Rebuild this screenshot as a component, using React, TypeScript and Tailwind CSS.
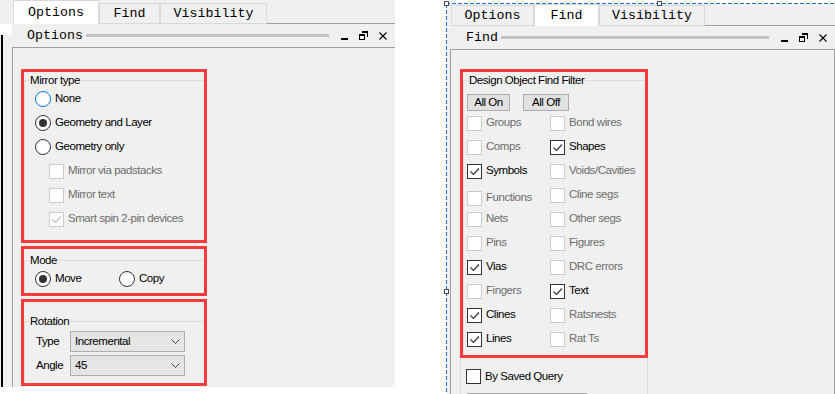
import React from 'react'

type Item = { label: string; on?: boolean; shift?: boolean }

const leftItems: Item[] = [
    { label: 'Groups' },
    { label: 'Comps' },
    { label: 'Symbols', on: true },
    { label: 'Functions', shift: true },
    { label: 'Nets' },
    { label: 'Pins' },
    { label: 'Vias', on: true },
    { label: 'Fingers' },
    { label: 'Clines', on: true },
    { label: 'Lines', on: true },
]

const rightItems: Item[] = [
    { label: 'Bond wires' },
    { label: 'Shapes', on: true },
    { label: 'Voids/Cavities' },
    { label: 'Cline segs' },
    { label: 'Other segs' },
    { label: 'Figures' },
    { label: 'DRC errors' },
    { label: 'Text', on: true },
    { label: 'Ratsnests' },
    { label: 'Rat Ts' },
]

function Radio({ label, checked, focus }: { label: string; checked?: boolean; focus?: boolean }) {
    return (
        <div className="flex h-[24px] items-center gap-[4px]">
            <span
                className={
                    focus
                        ? 'flex h-[16px] w-[16px] items-center justify-center rounded-full border border-[#0078d7] bg-white'
                        : 'flex h-[16px] w-[16px] items-center justify-center rounded-full border border-[#333333] bg-white'
                }
            >
                {checked && <span className="h-[8px] w-[8px] rounded-full bg-[#333333]" />}
            </span>
            <span className="text-black">{label}</span>
        </div>
    )
}

function Box({ on, disabled }: { on?: boolean; disabled?: boolean }) {
    return (
        <span
            className={
                disabled
                    ? 'flex h-[15px] w-[15px] shrink-0 items-center justify-center border border-[#cccccc] bg-white'
                    : 'flex h-[15px] w-[15px] shrink-0 items-center justify-center border border-[#333333] bg-white'
            }
        >
            {on && (
                <svg width="13" height="13" viewBox="0 0 13 13">
                    <path
                        d="M2.5 6.5 L5.5 9.5 L11 3.5"
                        fill="none"
                        stroke={disabled ? '#c2c2c2' : '#333333'}
                        strokeWidth="1.2"
                    />
                </svg>
            )}
        </span>
    )
}

function Check({ item, disabled }: { item: Item; disabled?: boolean }) {
    return (
        <div className={item.shift ? 'flex h-[24px] items-center gap-[4px] pt-[6px]' : 'flex h-[24px] items-center gap-[4px]'}>
            <Box on={item.on} disabled={disabled} />
            <span className={disabled ? 'text-[#6d6d6d]' : 'text-black'}>{item.label}</span>
        </div>
    )
}

function Select({ value }: { value: string }) {
    return (
        <div className="flex h-[21px] w-[115px] items-center justify-between border border-[#adadad] bg-[#e5e5e5] pl-[4px] pr-[4px]">
            <span>{value}</span>
            <svg width="9" height="6" viewBox="0 0 9 6">
                <path d="M0.5 0.5 L4.5 4.5 L8.5 0.5" fill="none" stroke="#444444" strokeWidth="1" />
            </svg>
        </div>
    )
}

function Tab({ label, active, cls }: { label: string; active?: boolean; cls: string }) {
    return (
        <div
            className={
                (active
                    ? 'border-x border-t border-[#d9d9d9] bg-white '
                    : 'border border-[#d9d9d9] bg-[#f0f0f0] ') +
                cls +
                " flex items-center justify-center font-['Liberation_Mono','Courier_New',monospace] text-[13.3px] tracking-normal text-black"
            }
        >
            {label}
        </div>
    )
}

function WinButtons() {
    return (
        <div className="flex items-center gap-[11px]">
            <svg width="7" height="10" viewBox="0 0 7 10">
                <rect x="0" y="7" width="7" height="2" fill="#000" />
            </svg>
            <svg width="9" height="10" viewBox="0 0 9 10" shapeRendering="crispEdges">
                <path d="M3 0.5 H8.5 V6 M3 1.5 H8.5" fill="none" stroke="#000" strokeWidth="1" />
                <rect x="0.5" y="3.5" width="5" height="5" fill="none" stroke="#000" strokeWidth="1" />
                <rect x="0" y="3" width="6" height="2" fill="#000" />
            </svg>
            <svg width="8" height="8" viewBox="0 0 8 8">
                <path d="M0.5 0.5 L7.5 7.5 M7.5 0.5 L0.5 7.5" stroke="#000" strokeWidth="1.1" />
            </svg>
        </div>
    )
}

function TitleRow({ title, pl }: { title: string; pl: string }) {
    return (
        <div className={'flex h-[24px] shrink-0 items-center border-b border-[#a0a0a0] pr-[8px] ' + pl}>
            <span className="font-['Liberation_Mono','Courier_New',monospace] text-[13.3px] tracking-normal text-black">
                {title}
            </span>
            <div className="ml-[3px] h-[3px] flex-1 bg-[#c3c3c3]" />
            <div className="ml-[12px]">
                <WinButtons />
            </div>
        </div>
    )
}

function Legend({ children }: { children: React.ReactNode }) {
    return <legend className="ml-[4px] px-[1px] leading-[14px] text-black">{children}</legend>
}

export default function App() {
    return (
        <div className="flex h-[394px] w-[835px] overflow-hidden bg-white font-['Liberation_Sans',Arial,sans-serif] text-[11.5px] tracking-[-0.45px] text-black">
            {/* Options panel */}
            <div className="flex h-[387px] w-[395px] shrink-0 flex-col bg-[#f0f0f0]">
                <div className="flex h-[24px] shrink-0 items-end">
                    <div className="w-[13px] self-stretch" />
                    <Tab label="Options" active cls="h-[24px] w-[86px]" />
                    <Tab label="Find" cls="h-[21px] w-[61px]" />
                    <Tab label="Visibility" cls="h-[21px] w-[107px]" />
                    <div className="flex-1 self-stretch border-b border-[#a0a0a0]" />
                </div>
                <div className="flex min-h-0 flex-1">
                    <div className="flex w-[12px] flex-col">
                        <div className="h-[11px] bg-white" />
                        <div className="flex-1 pl-[1px]">
                            <div className="h-full w-[2px] bg-black" />
                        </div>
                    </div>
                    <div className="flex flex-1 flex-col">
                        <TitleRow title="Options" pl="pl-[15px]" />
                        <div className="flex-1 border-l border-[#a0a0a0] pl-[8px] pt-[21px]">
                            <div className="flex h-[174px] w-[186px] flex-col border-[3px] border-[#f53b3b]">
                                <fieldset className="mt-[1px] flex-1 border-l border-t border-[#dcdcdc]">
                                    <Legend>Mirror type</Legend>
                                    <div className="pl-[10px]">
                                        <Radio label="None" focus />
                                        <Radio label="Geometry and Layer" checked />
                                        <Radio label="Geometry only" />
                                        <div className="pl-[14px]">
                                            <Check item={{ label: 'Mirror via padstacks' }} disabled />
                                            <Check item={{ label: 'Mirror text' }} disabled />
                                            <Check item={{ label: 'Smart spin 2-pin devices', on: true }} disabled />
                                        </div>
                                    </div>
                                </fieldset>
                            </div>
                            <div className="mt-[3px] flex h-[50px] w-[186px] flex-col border-[3px] border-[#f53b3b]">
                                <fieldset className="mt-[4px] flex-1 border-l border-t border-[#dcdcdc]">
                                    <Legend>Mode</Legend>
                                    <div className="flex pl-[10px]">
                                        <div className="w-[84px]">
                                            <Radio label="Move" checked />
                                        </div>
                                        <Radio label="Copy" />
                                    </div>
                                </fieldset>
                            </div>
                            <div className="mt-[3px] flex h-[87px] w-[186px] flex-col border-[3px] border-[#f53b3b]">
                                <fieldset className="mt-[12px] flex-1 border-l border-t border-[#dcdcdc]">
                                    <Legend>Rotation</Legend>
                                    <div className="flex flex-col gap-[3px] pl-[11px] pt-[3px]">
                                        <div className="flex items-center">
                                            <span className="w-[34px]">Type</span>
                                            <Select value="Incremental" />
                                        </div>
                                        <div className="flex items-center">
                                            <span className="w-[34px]">Angle</span>
                                            <Select value="45" />
                                        </div>
                                    </div>
                                </fieldset>
                            </div>
                        </div>
                    </div>
                </div>
            </div>

            {/* Find panel with selection frame */}
            <div className="relative ml-[49px] flex flex-1 flex-col">
                <div className="h-[3px] shrink-0" />
                <div className="ml-[2px] h-[1px] shrink-0 bg-[repeating-linear-gradient(90deg,#1672d4_0px,#1672d4_4px,transparent_4px,transparent_6px)]" />
                <div className="flex min-h-0 flex-1">
                    <div className="w-[2px]" />
                    <div className="w-[1px] bg-[repeating-linear-gradient(180deg,#1672d4_0px,#1672d4_4px,transparent_4px,transparent_6px)]" />
                    <div className="flex flex-1 flex-col overflow-hidden bg-[#f0f0f0]">
                        <div className="flex h-[22px] shrink-0 items-end">
                            <div className="w-[4px] self-stretch" />
                            <Tab label="Options" cls="h-[21px] w-[83px]" />
                            <Tab label="Find" active cls="h-[22px] w-[65px]" />
                            <Tab label="Visibility" cls="h-[21px] w-[106px]" />
                            <div className="flex-1 self-stretch border-b border-[#a0a0a0]" />
                        </div>
                        <div className="flex min-h-0 flex-1">
                            <div className="w-[3px]" />
                            <div className="flex flex-1 flex-col">
                                <TitleRow title="Find" pl="pl-[16px]" />
                                <div className="flex flex-1 flex-col border-x border-[#a0a0a0] pl-[9px] pt-[19px]">
                                    <div className="flex h-[289px] w-[188px] shrink-0 flex-col border-[3px] border-[#f53b3b]">
                                        <fieldset className="mt-[1px] flex-1 border-l border-t border-[#dcdcdc]">
                                            <Legend>Design Object Find Filter</Legend>
                                            <div className="pl-[3px]">
                                                <div className="mt-[7px] flex gap-[13px]">
                                                    <button className="flex h-[17px] w-[43px] items-center justify-center border border-[#adadad] bg-[#e1e1e1]">
                                                        All On
                                                    </button>
                                                    <button className="flex h-[17px] w-[46px] items-center justify-center border border-[#adadad] bg-[#e1e1e1]">
                                                        All Off
                                                    </button>
                                                </div>
                                                <div className="grid grid-cols-[83px_1fr]">
                                                    {leftItems.map((l, i) => (
                                                        <React.Fragment key={l.label}>
                                                            <Check item={l} disabled={!l.on} />
                                                            <Check item={rightItems[i]} disabled={!rightItems[i].on} />
                                                        </React.Fragment>
                                                    ))}
                                                </div>
                                            </div>
                                        </fieldset>
                                    </div>
                                    <div className="w-[188px] flex-1 border-x border-[#dcdcdc] pl-[5px] pt-[10px]">
                                        <div className="flex items-center gap-[4px]">
                                            <Box />
                                            <span>By Saved Query</span>
                                        </div>
                                        <div className="ml-[1px] mt-[8px] h-[22px] w-[120px] border border-[#adadad] bg-[#e1e1e1]" />
                                    </div>
                                </div>
                            </div>
                        </div>
                    </div>
                </div>
                <span className="absolute left-0 top-[1px] h-[5px] w-[5px] border border-[#4a4a4a] bg-white" />
                <span className="absolute left-[213px] top-[1px] h-[5px] w-[5px] border border-[#4a4a4a] bg-white" />
                <span className="absolute left-0 top-[289px] h-[5px] w-[5px] border border-[#4a4a4a] bg-white" />
            </div>
        </div>
    )
}
